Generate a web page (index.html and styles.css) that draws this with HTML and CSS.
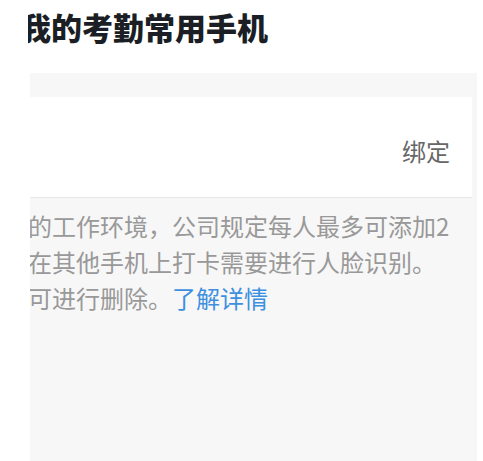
FILE: index.html
```html
<!DOCTYPE html>
<html lang="zh-CN">
<head>
<meta charset="utf-8">
<title>我的考勤常用手机</title>
<link rel="stylesheet" href="styles.css">
</head>
<body>
<div class="page">
  <div class="clip">
    <h1 class="title">我的考勤常用手机</h1>
  </div>
  <div class="panel">
    <div class="card">
      <span class="bind">绑定</span>
    </div>
    <div class="desc">
      <div class="line">的工作环境，公司规定每人最多可添加2</div>
      <div class="line">在其他手机上打卡需要进行人脸识别。</div>
      <div class="line">可进行删除。<a class="link" href="#">了解详情</a></div>
    </div>
  </div>
</div>
</body>
</html>
```

FILE: styles.css
```css
html, body {
  margin: 0;
  padding: 0;
  background: #ffffff;
}
body {
  width: 483px;
  height: 461px;
  overflow: hidden;
  font-family: "Noto Sans CJK SC", "Noto Sans", sans-serif;
}
.page {
  display: flex;
  flex-direction: column;
  height: 461px;
}
.clip {
  margin-left: 28px;
  overflow: hidden;
  padding-top: 7px;
}
.title {
  margin: 0 0 0 -8px;
  font-size: 31px;
  line-height: 40px;
  font-weight: 800;
  color: #1b1f25;
  white-space: nowrap;
}
.panel {
  margin-top: 26px;
  margin-left: 30px;
  width: 447px;
  flex: 1;
  background: #f7f7f7;
  padding-top: 24px;
  overflow: hidden;
}
.card {
  height: 101px;
  margin-right: 5px;
  background: #ffffff;
  border-bottom: 1px solid #e8e8e8;
  display: flex;
  justify-content: flex-end;
  align-items: center;
  padding-right: 22px;
  padding-top: 6px;
  box-sizing: border-box;
}
.bind {
  font-size: 24px;
  color: #666666;
}
.desc {
  margin-left: -2px;
  padding-top: 10px;
  font-size: 24px;
  line-height: 36px;
  color: #999999;
}
.line {
  white-space: nowrap;
}
.link {
  color: #3d8fe0;
  text-decoration: none;
}
```
